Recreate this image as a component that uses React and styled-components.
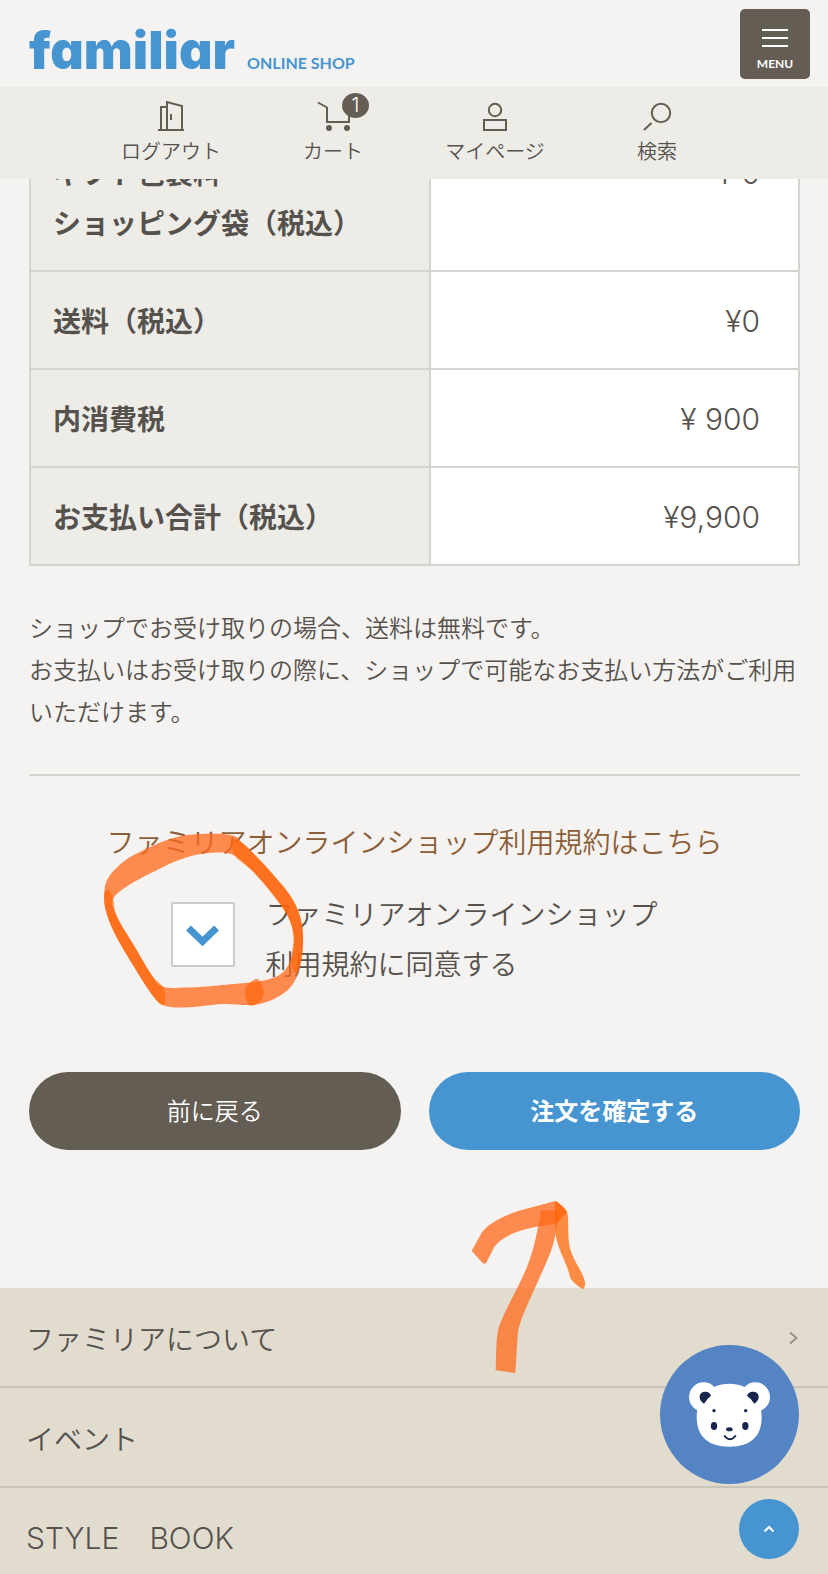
import React from "react";
import styled, { createGlobalStyle } from "styled-components";

const color = {
  page: "#f5f3f1",
  panel: "#edece7",
  line: "#d6d4cf",
  text: "#55524e",
  brown: "#645d53",
  blue: "#4695d0",
  link: "#8c5e38",
  footer: "#e2dccf",
  footerLine: "#c9c4b8",
  marker: "#ff6a1c",
  markerDark: "#ff6200",
};

const latin = `Inter, "Noto Sans CJK JP", sans-serif`;

const GlobalStyle = createGlobalStyle`
  *, *::before, *::after { box-sizing: border-box; }
  body {
    margin: 0;
    background: ${color.page};
    color: ${color.text};
    font-family: "Noto Sans CJK JP", sans-serif;
    font-weight: 350;
  }
  a { color: inherit; text-decoration: none; }
  button { font: inherit; border: 0; padding: 0; cursor: pointer; }
  svg { display: block; }
`;

const Page = styled.div`
  position: relative;
  overflow-x: clip;
`;

const Header = styled.header`
  position: sticky;
  top: 0;
  z-index: 5;
`;

const Brand = styled.div`
  display: flex;
  align-items: flex-start;
  justify-content: space-between;
  height: 87px;
  padding: 9px 18px 0 29px;
  background: ${color.page};
`;

const LogoLink = styled.a`
  display: flex;
  align-items: baseline;
  gap: 12px;
  padding-top: 10px;
  color: ${color.blue};
`;

const LogoName = styled.span`
  font-family: ${latin};
  font-size: 52px;
  line-height: 64px;
  font-weight: 900;
  font-feature-settings: "cv11";
`;

const LogoSub = styled.span`
  font-family: Lato, sans-serif;
  font-size: 16px;
  font-weight: 700;
`;

const MenuButton = styled.button`
  display: flex;
  flex-direction: column;
  align-items: center;
  gap: 9px;
  width: 70px;
  height: 70px;
  padding-top: 20px;
  border-radius: 5px;
  background: ${color.brown};
  color: #fff;
  font-family: Lato, sans-serif;
  font-size: 12px;
  line-height: 16px;
  font-weight: 700;
`;

const Nav = styled.nav`
  display: flex;
  justify-content: center;
  height: 92px;
  padding-top: 13px;
  background: ${color.panel};
`;

const NavLink = styled.a`
  display: flex;
  flex-direction: column;
  align-items: center;
  gap: 7px;
  width: 162px;
  font-size: 20px;
  line-height: 24px;
`;

const IconBox = styled.span`
  position: relative;
`;

const Badge = styled.span`
  position: absolute;
  left: 29px;
  top: -7px;
  width: 27px;
  height: 25px;
  border-radius: 50%;
  background: ${color.brown};
  color: #fff;
  font-family: ${latin};
  font-weight: 300;
  line-height: 24px;
  text-align: center;
`;

const Main = styled.main`
  padding: 0 28px 138px 29px;
`;

const TotalsView = styled.div`
  overflow: hidden;
`;

const Totals = styled.table`
  width: 100%;
  margin-top: -57px;
  table-layout: fixed;
  border-collapse: collapse;
  font-size: 28px;
  line-height: 50px;
`;

const HeadCell = styled.th`
  width: 52%;
  padding: 23px 22px;
  border: 2px solid ${color.line};
  background: ${color.panel};
  font-weight: 700;
  text-align: left;
  vertical-align: top;
`;

const AmountCell = styled.td`
  padding: 24px 38px 22px 22px;
  border: 2px solid ${color.line};
  background: #fff;
  font-family: ${latin};
  font-size: 30px;
  font-weight: 300;
  text-align: right;
  vertical-align: top;
`;

const Note = styled.p`
  margin: 40px 0 42px;
  font-size: 24px;
  line-height: 42px;
`;

const Terms = styled.section`
  display: flex;
  flex-direction: column;
  align-items: center;
  gap: 22px;
  padding-top: 40px;
  border-top: 2px solid ${color.line};
  font-size: 28px;
  line-height: 50px;
`;

const TermsLink = styled.a`
  color: ${color.link};
`;

const Agree = styled.div`
  display: flex;
  gap: 30px;
`;

const CheckWrap = styled.div`
  position: relative;
  width: 64px;
  height: 65px;
  margin-top: 14px;
`;

const Check = styled.input`
  appearance: none;
  display: block;
  width: 100%;
  height: 100%;
  margin: 0;
  border: 2px solid #cccacb;
  border-radius: 2px;
  background: #fff;
  & + svg { display: none; }
  &:checked + svg { display: block; }
`;

const CheckMark = styled.svg`
  position: absolute;
  inset: 0;
  pointer-events: none;
`;

const Marker = styled.svg`
  position: absolute;
  left: ${(p) => p.$left}px;
  top: ${(p) => p.$top}px;
  z-index: 3;
  pointer-events: none;
`;

const Actions = styled.div`
  display: grid;
  grid-template-columns: 1fr 1fr;
  gap: 28px;
  margin-top: 84px;
`;

const ActionSlot = styled.div`
  position: relative;
`;

const PillButton = styled.button`
  width: 100%;
  height: 78px;
  padding-bottom: 4px;
  border-radius: 39px;
  background: ${(p) => (p.$primary ? color.blue : color.brown)};
  color: #fff;
  font-size: 24px;
  font-weight: ${(p) => (p.$primary ? 700 : 350)};
`;

const FooterList = styled.ul`
  margin: 0;
  padding: 0;
  list-style: none;
  background: ${color.footer};
`;

const FooterItem = styled.li`
  border-bottom: 2px solid ${color.footerLine};
  &:last-child { border-bottom: 0; }
`;

const FooterLink = styled.a`
  display: flex;
  align-items: center;
  justify-content: space-between;
  padding: 26px 29px 24px 26px;
  font-family: ${(p) => (p.$latin ? latin : "inherit")};
  font-size: ${(p) => (p.$latin ? 30 : 28)}px;
  font-weight: ${(p) => (p.$latin ? 300 : 350)};
  line-height: 48px;
  ${FooterItem}:last-child & { padding-bottom: 12px; }
`;

const Floating = styled.div`
  position: fixed;
  right: 29px;
  bottom: 15px;
  z-index: 4;
  display: flex;
  flex-direction: column;
  align-items: flex-end;
  gap: 15px;
`;

const RoundButton = styled.button`
  display: flex;
  align-items: center;
  justify-content: center;
  width: ${(p) => p.$size}px;
  height: ${(p) => p.$size}px;
  border-radius: 50%;
  background: ${(p) => p.$fill};
`;

// Closed smooth outline through the given points (Catmull-Rom to Bezier).
function blob(points) {
  const n = points.length;
  const at = (i) => points[(i + n) % n];
  let d = `M${points[0][0]} ${points[0][1]}`;
  for (let i = 0; i < n; i += 1) {
    const [a, b, c, e] = [at(i - 1), at(i), at(i + 1), at(i + 2)];
    d += `C${b[0] + (c[0] - a[0]) / 6} ${b[1] + (c[1] - a[1]) / 6} ${c[0] - (e[0] - b[0]) / 6} ${c[1] - (e[1] - b[1]) / 6} ${c[0]} ${c[1]}`;
  }
  return `${d}Z`;
}

const ringOuter = [
  [46, 250], [58, 203], [110, 150], [190, 108], [260, 82], [330, 72], [425, 75], [465, 103], [540, 180],
  [600, 252], [630, 310], [642, 375], [637, 450], [616, 515], [572, 558], [500, 584], [400, 582],
  [300, 592], [230, 588], [192, 558], [130, 462], [76, 368], [50, 300],
];
const ringInner = [
  [72, 268], [120, 225], [200, 182], [270, 150], [340, 131], [425, 132], [485, 178], [545, 245],
  [596, 318], [614, 380], [608, 440], [580, 488], [520, 512], [400, 525], [310, 532], [222, 530],
  [188, 495], [134, 405], [84, 320],
];
const ringRight = [
  [430, 90], [465, 103], [540, 180], [600, 252], [630, 310], [642, 375], [637, 450], [622, 490],
  [606, 455], [614, 380], [596, 318], [545, 245], [485, 178], [438, 138],
];
const ringLeft = [
  [46, 250], [50, 300], [76, 368], [130, 462], [192, 558], [225, 585], [224, 535], [188, 495],
  [134, 405], [84, 320], [72, 268], [60, 240],
];

const CircleMark = () => (
  <Marker $left={-82} $top={-92} width="340" height="210" viewBox="0 0 1020 630" aria-hidden="true">
    <path fill={color.marker} fillOpacity="0.76" fillRule="evenodd" d={blob(ringOuter) + blob(ringInner)} />
    <g fill={color.markerDark} fillOpacity="0.6">
      <path d={blob(ringRight)} />
      <path d={blob(ringLeft)} />
      <path d={blob([[470, 535], [505, 506], [524, 545], [512, 575], [480, 585]])} />
    </g>
  </Marker>
);

const ArrowMark = () => (
  <Marker $left={12} $top={108} width="170" height="210" viewBox="0 0 510 630" aria-hidden="true">
    <g fill={color.marker} fillOpacity="0.76">
      <path d="M92 212L122 158C145 128 190 104 250 88L335 65Q345 60 352 68L378 95L345 132C265 140 190 160 160 200L136 248Q130 255 122 246Z" />
      <path d="M300 90L350 92C352 150 335 205 315 250L268 355C250 395 232 435 230 465L223 579L164 571C166 530 164 490 171 450C185 400 235 320 260 255C280 205 290 150 300 90Z" />
    </g>
    <path
      fill={color.markerDark}
      fillOpacity="0.72"
      d="M342 64C360 72 376 84 380 104C384 140 378 180 390 215C402 250 424 272 432 306Q434 322 426 328C410 318 396 308 387 292C382 255 352 215 344 165C346 125 340 95 342 64Z"
    />
  </Marker>
);

const NavIcon = ({ children }) => (
  <svg width="40" height="32" viewBox="0 0 40 32" fill="none" stroke={color.brown} strokeWidth="2" aria-hidden="true">
    {children}
  </svg>
);

const navItems = [
  {
    label: "ログアウト",
    icon: <path d="M7 30H33M10 30V7H16M16 30V2L31 6V30M20 14V20" />,
  },
  {
    label: "カート",
    count: 1,
    icon: (
      <>
        <path d="M5 2.500L14 7.500V22H36V12" />
        <circle cx="16" cy="28" r="3" fill={color.brown} stroke="none" />
        <circle cx="34" cy="28" r="3" fill={color.brown} stroke="none" />
      </>
    ),
  },
  {
    label: "マイページ",
    icon: (
      <>
        <circle cx="20" cy="10" r="6.200" />
        <rect x="9" y="20" width="22" height="10" />
      </>
    ),
  },
  {
    label: "検索",
    icon: (
      <>
        <circle cx="24" cy="13" r="9.200" />
        <path d="M7 30L14.500 23" />
      </>
    ),
  },
];

const totals = [
  { name: ["ギフト包装料", "ショッピング袋（税込）"], amount: "¥ 0" },
  { name: ["送料（税込）"], amount: "¥0" },
  { name: ["内消費税"], amount: "¥ 900" },
  { name: ["お支払い合計（税込）"], amount: "¥9,900" },
];

const footerItems = [
  { label: "ファミリアについて", arrow: true },
  { label: "イベント" },
  { label: "STYLE　BOOK", latin: true },
];

const Bear = () => (
  <svg width="81" height="65" viewBox="145 187 243 195" aria-hidden="true">
    <g fill="#fff">
      <circle cx="189" cy="232" r="44" />
      <circle cx="344" cy="232" r="44" />
      <path d="M266 192C330 192 363 240 363 292C363 350 330 381 266 381C202 381 168 350 168 292C168 240 202 192 266 192Z" />
    </g>
    <g fill="#17264f">
      <path d="M190 252C174 242 172 222 188 217C198 214 208 217 211 228Q198 238 190 252Z" />
      <path d="M341 252C357 242 359 222 343 217C333 214 323 217 319 228Q333 238 341 252Z" />
      <circle cx="220" cy="273" r="5" />
      <circle cx="315" cy="273" r="5" />
      <ellipse cx="220" cy="319" rx="9.500" ry="12" />
      <ellipse cx="314" cy="319" rx="9.500" ry="12" />
      <ellipse cx="266" cy="329" rx="10" ry="6" />
    </g>
    <path d="M252 349Q268 369 284 349" fill="none" stroke="#17264f" strokeWidth="6" strokeLinecap="round" />
  </svg>
);

export default function App() {
  return (
    <Page>
      <GlobalStyle />
      <Header>
        <Brand>
          <LogoLink href="#top">
            <LogoName>familiar</LogoName>
            <LogoSub>ONLINE SHOP</LogoSub>
          </LogoLink>
          <MenuButton type="button">
            <svg width="26" height="18" viewBox="0 0 26 18" stroke="#fff" strokeWidth="2" aria-hidden="true">
              <path d="M0 1H26M0 9H26M0 17H26" />
            </svg>
            MENU
          </MenuButton>
        </Brand>
        <Nav>
          {navItems.map((item) => (
            <NavLink href="#nav" key={item.label}>
              <IconBox>
                <NavIcon>{item.icon}</NavIcon>
                {item.count && <Badge>{item.count}</Badge>}
              </IconBox>
              {item.label}
            </NavLink>
          ))}
        </Nav>
      </Header>

      <Main>
        <TotalsView>
          <Totals>
            <tbody>
              {totals.map((row) => (
                <tr key={row.name[0]}>
                  <HeadCell scope="row">
                    {row.name.map((line) => (
                      <div key={line}>{line}</div>
                    ))}
                  </HeadCell>
                  <AmountCell>{row.amount}</AmountCell>
                </tr>
              ))}
            </tbody>
          </Totals>
        </TotalsView>

        <Note>
          ショップでお受け取りの場合、送料は無料です。
          <br />
          お支払いはお受け取りの際に、ショップで可能なお支払い方法がご利用いただけます。
        </Note>

        <Terms>
          <TermsLink href="#terms">ファミリアオンラインショップ利用規約はこちら</TermsLink>
          <Agree>
            <CheckWrap>
              <Check type="checkbox" id="agree" defaultChecked />
              <CheckMark width="64" height="65" viewBox="0 0 64 65" fill="none" stroke={color.blue} strokeWidth="7">
                <path d="M17.500 26L31.500 39.500L45.500 26" />
              </CheckMark>
              <CircleMark />
            </CheckWrap>
            <label htmlFor="agree">
              ファミリアオンラインショップ
              <br />
              利用規約に同意する
            </label>
          </Agree>
        </Terms>

        <Actions>
          <ActionSlot>
            <PillButton type="button">前に戻る</PillButton>
          </ActionSlot>
          <ActionSlot>
            <PillButton type="button" $primary>
              注文を確定する
            </PillButton>
            <ArrowMark />
          </ActionSlot>
        </Actions>
      </Main>

      <footer>
        <FooterList>
          {footerItems.map((item) => (
            <FooterItem key={item.label}>
              <FooterLink href="#footer" $latin={item.latin}>
                {item.label}
                {item.arrow && (
                  <svg width="12" height="14" viewBox="0 0 12 14" fill="none" stroke="#97928a" strokeWidth="2" aria-hidden="true">
                    <path d="M3 1.500L9.500 7L3 12.500" />
                  </svg>
                )}
              </FooterLink>
            </FooterItem>
          ))}
        </FooterList>
      </footer>

      <Floating>
        <RoundButton type="button" aria-label="チャット" $size={139} $fill="#5584c5">
          <Bear />
        </RoundButton>
        <RoundButton type="button" aria-label="ページの先頭へ" $size={60} $fill={color.blue}>
          <svg width="12" height="8" viewBox="0 0 12 8" fill="none" stroke="#fff" strokeWidth="2" aria-hidden="true">
            <path d="M1.500 6.500L6 2L10.500 6.500" />
          </svg>
        </RoundButton>
      </Floating>
    </Page>
  );
}
